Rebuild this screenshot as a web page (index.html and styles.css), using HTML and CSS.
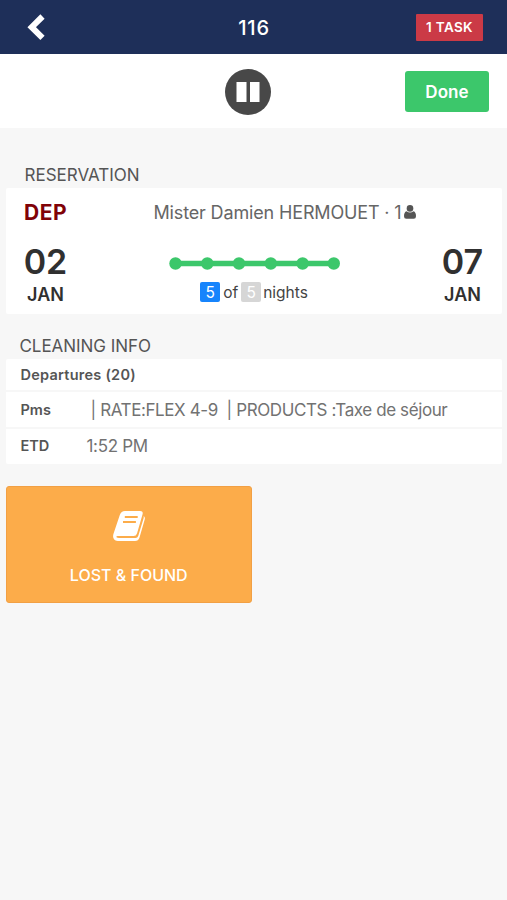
FILE: index.html
```html
<!DOCTYPE html>
<html lang="en">
<head>
<meta charset="utf-8">
<title>Room 116</title>
<link rel="stylesheet" href="styles.css">
</head>
<body>
<header class="topbar">
  <svg class="back" viewBox="0 0 18 28"><path d="M15.500 2.500 4.700 13.200 15.500 23.900" fill="none" stroke="#fff" stroke-width="6"/></svg>
  <h1 class="room">116</h1>
  <div class="tasks">1 TASK</div>
</header>
<section class="toolbar">
  <svg class="pause" viewBox="0 0 46 46"><circle cx="23" cy="23" r="23" fill="#484848"/><path d="M11.500 13h10v20h-10zM25 13h9.500v20H25z" fill="#fff"/></svg>
  <button class="done">Done</button>
</section>
<main>
  <h2 class="heading">RESERVATION</h2>
  <section class="card reservation">
    <div class="guest-row">
      <strong class="dep">DEP</strong>
      <span class="guest">Mister Damien HERMOUET · 1</span>
      <svg class="person" viewBox="0 0 12 14"><circle cx="6" cy="3.400" r="3.300"/><path d="M2.500 6.200Q6 9 9.500 6.200 12 7 12 11.200 12 13.700 9.700 13.700H2.300Q0 13.700 0 11.200 0 7 2.500 6.200Z"/></svg>
    </div>
    <div class="stay">
      <div class="date"><span class="day">02</span><span class="month">JAN</span></div>
      <div class="progress">
        <svg class="track" viewBox="0 0 172 14"><path d="M7.500 7.500h159" stroke="#3cc76b" stroke-width="5.500"/><g fill="#3cc76b"><circle cx="7.500" cy="7.500" r="6.200"/><circle cx="39.300" cy="7.500" r="6.200"/><circle cx="71" cy="7.500" r="6.200"/><circle cx="102.800" cy="7.500" r="6.200"/><circle cx="134.600" cy="7.500" r="6.200"/><circle cx="165.800" cy="7.500" r="6.200"/></g></svg>
        <div class="nights"><span class="num current">5</span><span class="of">of</span><span class="num total">5</span><span class="unit">nights</span></div>
      </div>
      <div class="date"><span class="day">07</span><span class="month">JAN</span></div>
    </div>
  </section>
  <h2 class="heading cleaning">CLEANING INFO</h2>
  <section class="card info">
    <div class="row first"><strong class="wide">Departures (20)</strong></div>
    <div class="row pms"><strong>Pms</strong><span class="value pms-value">| RATE:FLEX 4-9 &nbsp;| PRODUCTS :Taxe de séjour</span></div>
    <div class="row etd"><strong>ETD</strong><span class="value time">1:52 PM</span></div>
  </section>
  <button class="lost">
    <svg class="book" viewBox="0 0 32 30"><path d="M12 0H27Q30.500 0 29.500 3.500L24 22.500Q23.200 25 20.500 25H4.500Q3 25 3.500 26.300 4 27 6 27H22.500Q24.500 27 25.200 25L30.700 7V5Q32.400 6.300 31.700 8.500L26.500 26.500Q25.400 30 22 30H5Q1.500 30 .3 26.800-.2 25 .5 22.800L6.800 4Q8.200 0 12 0Z" fill="#fff"/><path d="M11.800 6H24.700M10 11H22.900" stroke="#fcac4a" stroke-width="1.900"/></svg>
    <span class="lost-label">LOST &amp; FOUND</span>
  </button>
</main>
</body>
</html>
```
FILE: styles.css
```css
* { box-sizing: border-box; }
body {
  margin: 0;
  min-height: 900px;
  background: #f7f7f7;
  color: #555;
  font-family: Inter, "Liberation Sans", sans-serif;
}
h1, h2 { margin: 0; }
button { border: 0; font-family: inherit; color: #fff; }
svg { display: block; flex: none; }
.topbar {
  height: 54px;
  background: #1e2f59;
  color: #fff;
  display: grid;
  grid-template-columns: 1fr 60px 1fr;
  align-items: center;
  padding: 1px 24px 0;
}
.back { width: 18px; height: 28px; margin-left: 3px; }
.room { font-size: 20px; font-weight: 500; letter-spacing: .8px; text-align: center; line-height: 24px; padding-left: 1px; }
.tasks {
  justify-self: end;
  width: 67px;
  height: 27px;
  background: #cb3a46;
  border-radius: 1px;
  font-size: 13.5px;
  font-weight: 600;
  letter-spacing: .35px;
  line-height: 27px;
  text-align: center;
}
.toolbar {
  height: 74px;
  background: #fff;
  display: grid;
  grid-template-columns: 1fr 46px 1fr;
  align-items: center;
  padding: 1px 18px 0 6px;
}
.pause { grid-column: 2; width: 46px; height: 46px; }
.done {
  justify-self: end;
  width: 84px;
  height: 41px;
  padding: 0;
  background: #3cc76b;
  border-radius: 3px;
  font-size: 17px;
  font-weight: 600;
  letter-spacing: .1px;
}
main { padding: 0 5px 0 6px; }
.heading {
  height: 60px;
  padding: 36px 0 0 18.500px;
  font-size: 17px;
  font-weight: 400;
  line-height: 22px;
}
.card { background: #fff; border-radius: 2px; }
.reservation { height: 126px; padding: 12px 18px 0; }
.guest-row { display: flex; align-items: center; height: 24px; }
.dep { width: 129.500px; color: #800207; font-size: 21px; font-weight: 700; letter-spacing: .6px; }
.guest { font-size: 18px; font-weight: 400; color: #666; letter-spacing: -.15px; white-space: nowrap; }
.person { width: 12px; height: 14px; margin-left: 3px; fill: #555; }
.stay { display: flex; justify-content: space-between; padding-top: 19px; color: #303030; }
.date { display: flex; flex-direction: column; align-items: center; width: 43px; }
.day { font-size: 34px; font-weight: 600; line-height: 38px; }
.month { font-size: 18px; font-weight: 600; line-height: 27px; }
.progress { display: flex; flex-direction: column; align-items: center; padding-top: 13px; }
.track { width: 172px; height: 14px; }
.nights { display: flex; align-items: center; height: 20px; margin-top: 12px; font-size: 15.500px; color: #444; }
.num { width: 20px; height: 20px; border-radius: 2px; color: #fff; line-height: 21px; text-align: center; }
.current { background: #1684fc; }
.total { background: #d6d6d6; }
.of { margin: 0 3px; }
.unit { margin-left: 2px; }
.cleaning { height: 45px; padding: 21px 0 0 13.500px; letter-spacing: -.05px; }
.info { height: 105px; }
.row { display: flex; align-items: center; height: 37px; padding-left: 14.500px; border-bottom: 2px solid #f7f7f7; }
.row strong { width: 66px; font-size: 14.500px; font-weight: 600; }
.row .wide { width: auto; letter-spacing: .25px; }
.first { height: 33px; }
.etd { height: 35px; border: 0; padding-bottom: 1px; }
.etd strong { padding-bottom: 2px; }
.value { font-size: 17px; font-weight: 400; color: #727272; letter-spacing: -.3px; white-space: nowrap; }
.pms-value { margin-left: 4px; letter-spacing: -.4px; }
.lost {
  display: flex;
  flex-direction: column;
  align-items: center;
  width: 245.500px;
  height: 117px;
  margin-top: 22px;
  padding: 24px 0 0;
  background: #fcac4a;
  border: 1px solid #f2a044;
  border-radius: 3px;
}
.book { width: 32px; height: 30px; }
.lost-label { margin-top: 24px; font-size: 16px; font-weight: 500; line-height: 20px; }
```
